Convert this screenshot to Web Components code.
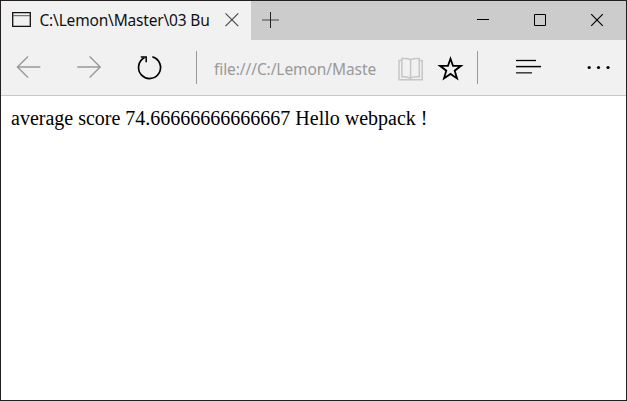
<!DOCTYPE html>
<html lang="en">
<head>
<meta charset="utf-8">
<title>C:\Lemon\Master\03 Bu</title>
<style>
html,body{margin:0;height:100%;overflow:hidden;background:#fff}
</style>
</head>
<body>
<browser-window>
  <tab-strip slot="tabs"><browser-tab>C:\Lemon\Master\03 Bu</browser-tab></tab-strip>
  <tool-bar slot="tools">file:///C:/Lemon/Maste</tool-bar>
  <page-view>average score 74.66666666666667 Hello webpack !</page-view>
</browser-window>
<script>
const define = (name, html) => {
  const t = document.createElement('template');
  t.innerHTML = html;
  customElements.define(name, class extends HTMLElement {
    constructor() {
      super();
      this.attachShadow({mode: 'open'}).append(t.content.cloneNode(true));
    }
  });
};

const icons = {
  page: [20, 17, '<path d="M.7 .7h17.6v13.6H.7z" stroke="#111" stroke-width="1.3"/><path d="M1 3.7h17" stroke="#555"/>'],
  dismiss: [14, 15, '<path d="M.5 .3l12.8 12.8M13.3 .3L.5 13.1" stroke="#444" stroke-width="1.1"/>'],
  plus: [17, 17, '<path d="M0 8h17" stroke="#444"/><path d="M8.5 0v16" stroke="#222"/>'],
  minimize: [12, 13, '<path d="M0 5.5h12" stroke="#000"/>'],
  maximize: [12, 13, '<path d="M.5 .5h11v11H.5z" stroke="#000"/>'],
  close: [12, 13, '<path d="M.2 .2l11.6 11.6M11.8 .2L.2 11.8" stroke="#000" stroke-width="1.15"/>'],
  back: [25, 23, '<path d="M24.3 11H1.5M12 .4L1.4 11 12 21.6" stroke="#999" stroke-width="1.4"/>'],
  forward: [25, 23, '<path d="M.3 11h22.8M12.6 .4L23.2 11 12.6 21.6" stroke="#999" stroke-width="1.4"/>'],
  refresh: [26, 25, '<path d="M15.4 1.9A11 11 0 1 1 7.4 2.8" stroke="#000" stroke-width="1.7"/><path d="M3.8 1.9H9.2V7.3" stroke="#000" stroke-width="1.5"/>'],
  book: [25, 25, '<g stroke="#c6c6c6" stroke-width="1.5"><path d="M3.6 5.5H1V24.7h23.2V5.5h-2.6"/><path d="M12.6 4.6C10.5 3.4 7 3.3 3.9 3.5V21.7C7 21.5 10.5 21.6 12.6 23.3C14.6 21.6 18.2 21.5 21.3 21.7V3.5C18.2 3.3 14.6 3.4 12.6 4.6V23.3"/></g>'],
  star: [26, 27, '<path d="M12.5 4.8l2.5 7h8l-6.3 4.9 2.3 7.7-6.5-4.5L6 24.4l2.3-7.7L2 11.8h8z" stroke="#000" stroke-width="1.8"/>'],
  hub: [26, 15, '<path d="M0 .5h20" stroke="#000" stroke-width="1.3"/><path d="M0 6.6h25" stroke="#000" stroke-width="1.5"/><path d="M0 12.8h16" stroke="#444" stroke-width="1.6"/>'],
  more: [24, 5, '<g fill="#000"><circle cx="1.2" cy="2.5" r="1.6"/><circle cx="10.5" cy="2.5" r="1.6"/><circle cx="20" cy="2.5" r="1.6"/></g>']
};
customElements.define('ui-icon', class extends HTMLElement {
  constructor() { super(); this.attachShadow({mode: 'open'}); }
  connectedCallback() {
    const [w, h, body] = icons[this.getAttribute('name')];
    this.shadowRoot.innerHTML = `<style>:host{display:block;flex:none}svg{display:block;overflow:visible}</style>
      <svg width="${w}" height="${h}" viewBox="0 0 ${w} ${h}" fill="none">${body}</svg>`;
  }
});

define('browser-tab', `<style>
  :host{display:flex;box-sizing:border-box;width:250px;height:39px;padding-left:11px;background:#f1f1f1;align-items:center}
  .label{width:176px;margin:0 0 1px 7.5px;white-space:nowrap;overflow:hidden;font:15.5px/24px "Noto Sans",sans-serif;letter-spacing:-.18px;color:#111}
  .x{margin-left:9.5px}
  </style><ui-icon name="page"></ui-icon><span class="label"><slot></slot></span><ui-icon class="x" name="dismiss"></ui-icon>`);

define('tab-strip', `<style>
  :host{display:flex;height:39px;background:#ccc;align-items:center}
  .plus{margin-left:11px}
  .controls{display:flex;gap:45px;margin-left:auto;margin-right:23px}
  </style><slot></slot><ui-icon class="plus" name="plus"></ui-icon>
  <div class="controls"><ui-icon name="minimize"></ui-icon><ui-icon name="maximize"></ui-icon><ui-icon name="close"></ui-icon></div>`);

define('tool-bar', `<style>
  :host{display:grid;box-sizing:border-box;height:56px;padding-left:15px;background:#f1f1f1;border-bottom:1px solid #c8c8c8;align-items:center;
    grid-template-columns:61px 60px 59px 18px 184px 40px 39px 39px 72px 24px}
  .sep{width:1px;height:33px;background:#999}
  .url{width:162px;overflow:hidden;white-space:nowrap;font:15.5px/24px "Noto Sans",sans-serif;letter-spacing:-.08px;color:#999;margin-top:3px}
  </style><ui-icon name="back"></ui-icon><ui-icon name="forward"></ui-icon><ui-icon name="refresh"></ui-icon><i class="sep"></i>
  <span class="url"><slot></slot></span><ui-icon name="book"></ui-icon><ui-icon name="star"></ui-icon><i class="sep"></i><ui-icon name="hub"></ui-icon><ui-icon name="more"></ui-icon>`);

define('page-view', `<style>
  :host{display:block;padding:11px 10px;font:20px/23px "Liberation Serif",serif;color:#000;white-space:nowrap}
  </style><slot></slot>`);

define('browser-window', `<style>
  :host{display:flex;flex-direction:column;box-sizing:border-box;width:627px;height:401px;border:1px solid #231f20;background:#fff;overflow:hidden}
  </style><slot name="tabs"></slot><slot name="tools"></slot><slot></slot>`);
</script>
</body>
</html>
